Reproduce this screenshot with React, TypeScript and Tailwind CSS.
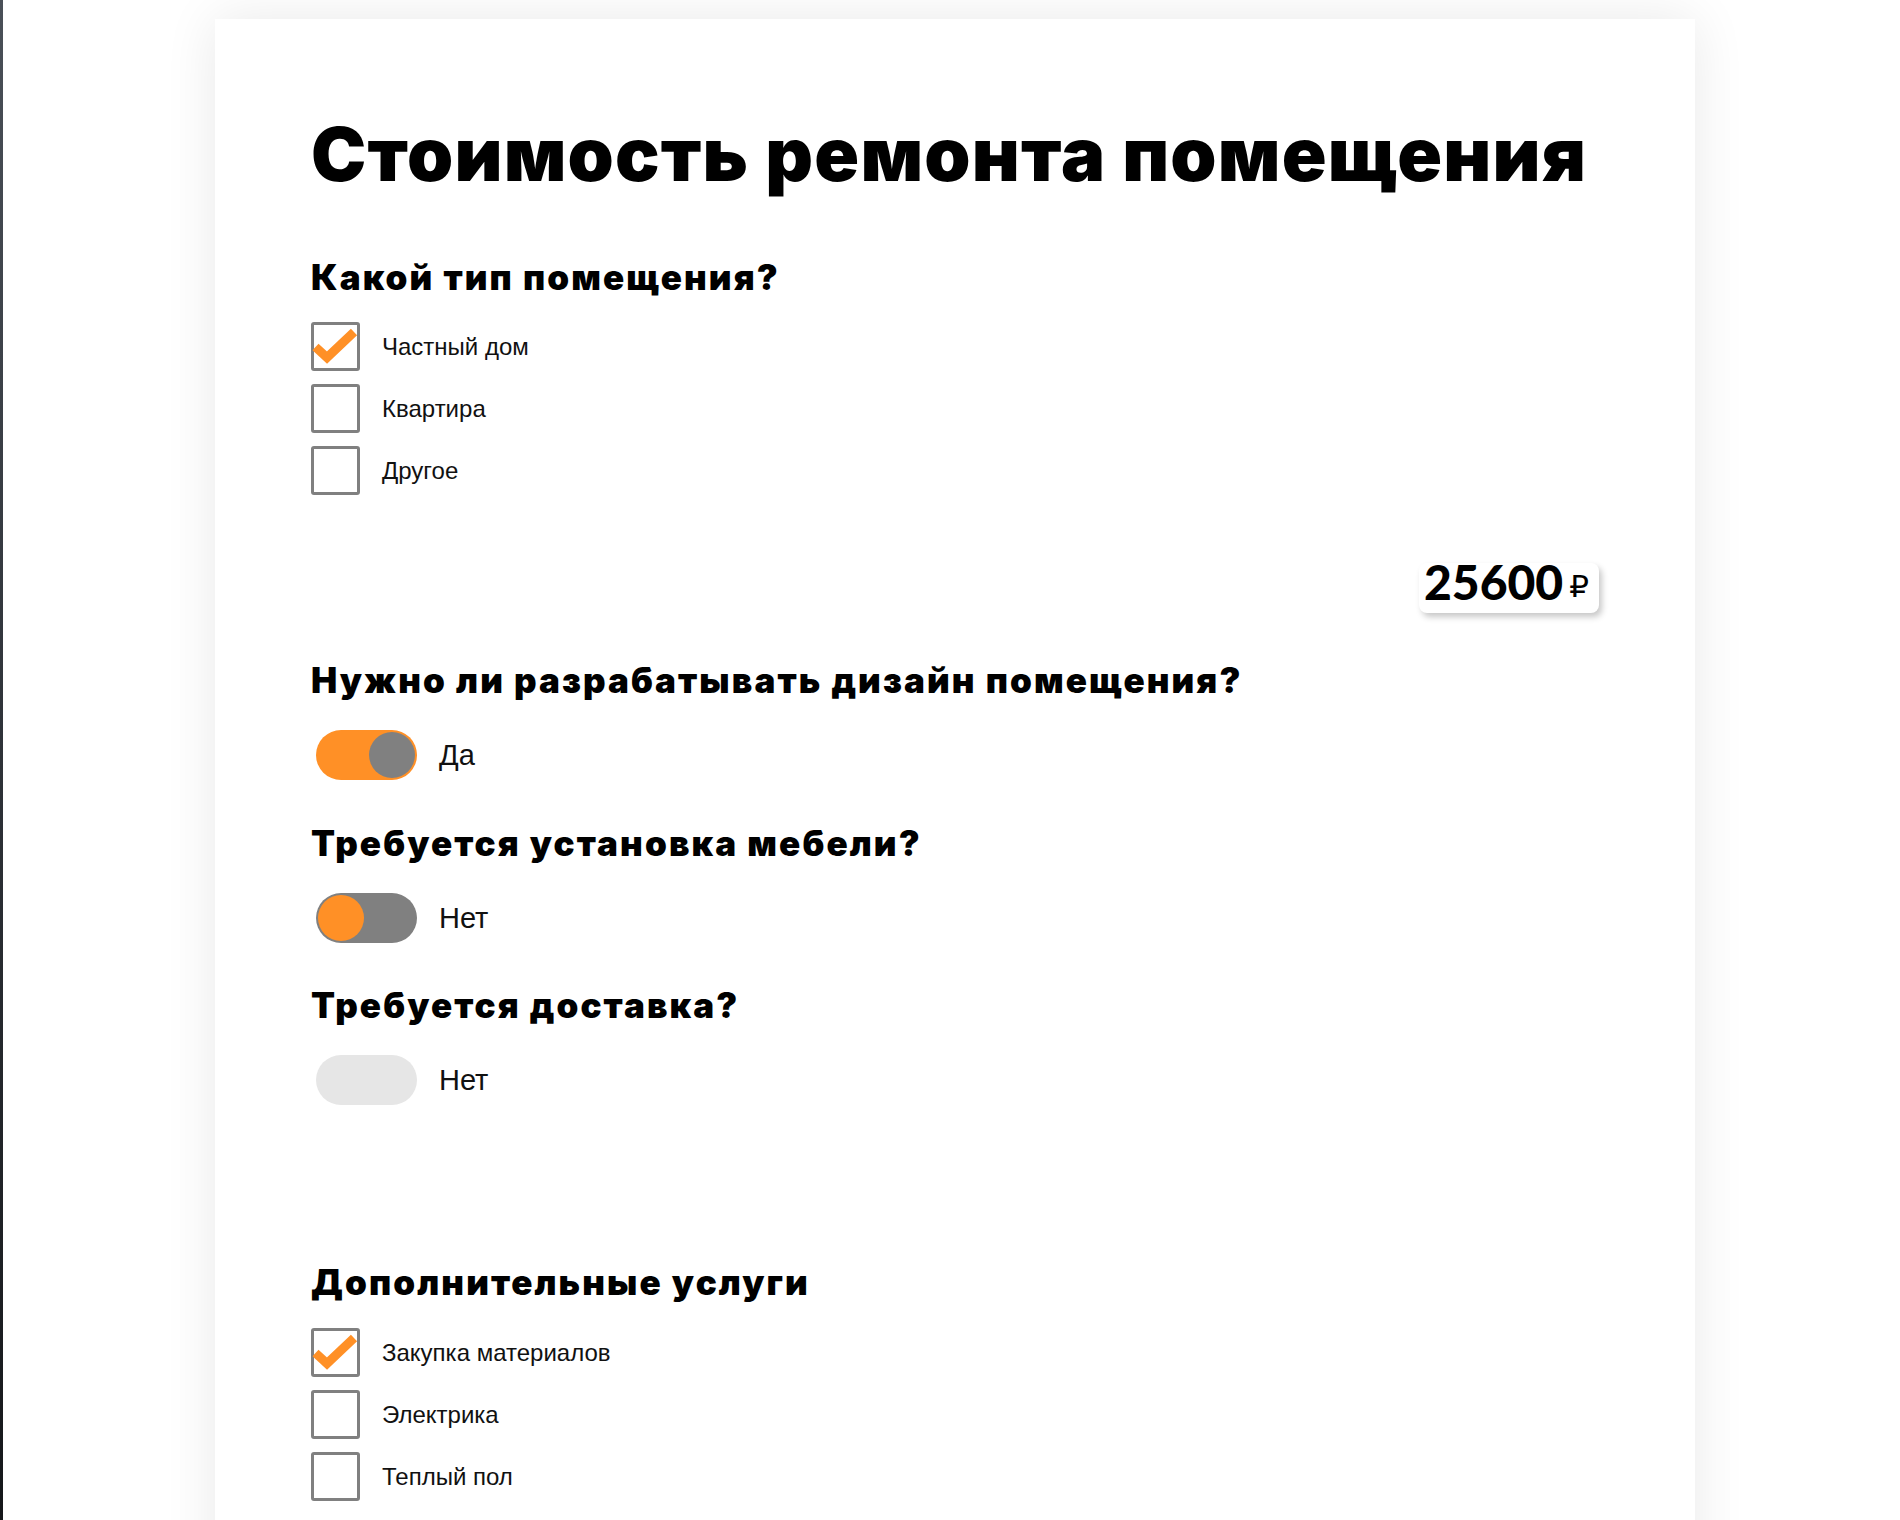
import React from "react";

const heading = "font-['Inter',sans-serif] font-black text-black leading-none";
const sub = `${heading} text-[35px] tracking-[2.1px]`;

function Checkbox({ label, checked }: { label: string; checked?: boolean }) {
  return (
    <div className="flex items-center gap-[22px]">
      <div className="relative w-[49px] h-[49px] border-[3px] border-[#808080] rounded-[3px] bg-white">
        {checked && (
          <svg
            className="absolute -left-[3px] -top-[3px] overflow-visible"
            width="49"
            height="49"
            viewBox="0 0 49 49"
          >
            <polyline
              points="4.5,25 16,35.5 43,10"
              fill="none"
              stroke="#ff9026"
              strokeWidth="9"
              strokeLinejoin="miter"
            />
          </svg>
        )}
      </div>
      <span className="font-['Liberation_Sans',Arial,sans-serif] text-[24px] text-[#111]">
        {label}
      </span>
    </div>
  );
}

function Toggle({ state, label }: { state: "on" | "off" | "disabled"; label: string }) {
  return (
    <div className="flex items-center gap-[22px] ml-[5px]">
      {state === "on" && (
        <div className="w-[101px] h-[50px] rounded-full bg-[#ff9026] p-[2px] flex justify-end">
          <div className="w-[46px] h-[46px] rounded-full bg-[#808080]" />
        </div>
      )}
      {state === "off" && (
        <div className="w-[101px] h-[50px] rounded-full bg-[#808080] p-[2px] flex justify-start">
          <div className="w-[46px] h-[46px] rounded-full bg-[#ff9026]" />
        </div>
      )}
      {state === "disabled" && <div className="w-[101px] h-[50px] rounded-full bg-[#e6e6e6]" />}
      <span className="font-['Liberation_Sans',Arial,sans-serif] text-[29px] text-[#111] mt-[2px]">
        {label}
      </span>
    </div>
  );
}

export default function App() {
  return (
    <div className="flex h-[1520px] w-[1900px] overflow-hidden bg-white">
      {/* left edge of the background picture */}
      <div className="w-[3px] h-full shrink-0 bg-gradient-to-b from-[#4a5058] via-[#2e3238] to-[#15171a]" />

      <div className="flex-1">
        <div className="ml-[212px] mt-[19px] w-[1480px] min-h-[1600px] bg-white shadow-[0_0_50px_rgba(0,0,0,0.09)] px-[96px] pt-[98px]">
          {/* Title */}
          <h1 className={`${heading} text-[74px] tracking-[1.2px]`}>Стоимость ремонта помещения</h1>

          {/* Room type */}
          <h2 className={`${sub} mt-[69px]`}>Какой тип помещения?</h2>
          <div className="mt-[27px] flex flex-col gap-[13px]">
            <Checkbox label="Частный дом" checked />
            <Checkbox label="Квартира" />
            <Checkbox label="Другое" />
          </div>

          {/* Price */}
          <div className="mt-[68px] flex justify-end">
            <div className="h-[50px] w-[180px] rounded-lg bg-white shadow-[3px_4px_6px_rgba(0,0,0,0.22)] flex items-center pl-[5px] gap-[6px]">
              <span className="font-['Lato',sans-serif] font-black text-[48px] leading-none text-black -mt-[12px]">
                25600
              </span>
              <span className="font-['Liberation_Sans','DejaVu_Sans',sans-serif] text-[31px] leading-none text-black -mt-[4px]">
                ₽
              </span>
            </div>
          </div>

          {/* Design */}
          <h2 className={`${sub} mt-[50px]`}>Нужно ли разрабатывать дизайн помещения?</h2>
          <div className="mt-[32px]">
            <Toggle state="on" label="Да" />
          </div>

          <h2 className={`${sub} mt-[46px]`}>Требуется установка мебели?</h2>
          <div className="mt-[32px]">
            <Toggle state="off" label="Нет" />
          </div>

          <h2 className={`${sub} mt-[45px]`}>Требуется доставка?</h2>
          <div className="mt-[32px]">
            <Toggle state="disabled" label="Нет" />
          </div>

          {/* Extra services */}
          <h2 className={`${sub} mt-[160px]`}>Дополнительные услуги</h2>
          <div className="mt-[28px] flex flex-col gap-[13px]">
            <Checkbox label="Закупка материалов" checked />
            <Checkbox label="Электрика" />
            <Checkbox label="Теплый пол" />
          </div>
        </div>
      </div>
    </div>
  );
}
